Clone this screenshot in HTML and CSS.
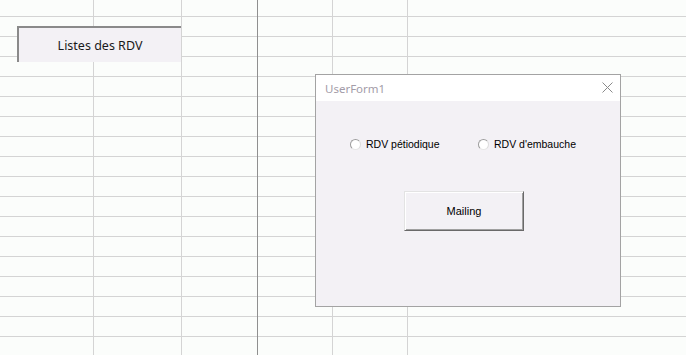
FILE: index.html
```html
<!DOCTYPE html>
<html>
<head>
<meta charset="UTF-8">
<title>Classeur</title>
<link rel="stylesheet" href="styles.css">
</head>
<body>
  <div id="feuille">
    <div class="colonne"></div>
    <div class="colonne"></div>
    <div class="colonne fige"></div>
    <div class="colonne"></div>
    <div class="colonne"></div>
    <div class="colonne dernier"></div>

    <button id="listes" type="button">Listes des RDV</button>

    <div id="userForm">
      <div class="titre">
        <span>UserForm1</span>
        <svg class="fermer" width="11" height="11" viewBox="0 0 11 11">
          <path d="M0.5 0.5 L10.5 10.5 M10.5 0.5 L0.5 10.5" stroke="#8a8a8a" stroke-width="1" fill="none"/>
        </svg>
      </div>
      <div class="corps">
        <div class="choix">
          <label class="option"><span class="rond"></span>RDV pétiodique</label>
          <label class="option"><span class="rond"></span>RDV d'embauche</label>
        </div>
        <button id="mailing" type="button">Mailing</button>
      </div>
    </div>
  </div>
</body>
</html>
```
FILE: styles.css
```css
body{
  margin: 0;
  background-color: #fbfdfb;
  font-family: "Liberation Sans", Arial, sans-serif;
}
#feuille{
  position: relative;
  height: 355px;
  display: grid;
  grid-template-columns: 94px 88px 76px 75px 75px 1fr;
  background-image: repeating-linear-gradient(to bottom, transparent 0 19px, #d4d4d4 19px 20px);
  background-position: 0 -3px;
  overflow: hidden;
}
.colonne{
  border-right: 1px solid #d4d4d4;
}
.fige{
  border-right-color: #8f8f8f;
}
.dernier{
  border-right: none;
}
#listes{
  position: absolute;
  left: 17px;
  top: 26px;
  width: 164px;
  height: 36px;
  margin: 0;
  padding: 0;
  border: none;
  border-top: 2px solid #8a8a8a;
  border-left: 2px solid #8a8a8a;
  background-color: #f3f1f5;
  font-family: "Noto Sans", "Open Sans", sans-serif;
  font-size: 12.5px;
  color: #1a1a1a;
}
#userForm{
  position: absolute;
  left: 315px;
  top: 74px;
  width: 304px;
  height: 231px;
  border: 1px solid #a3a3a3;
  background-color: #f3f1f5;
  display: flex;
  flex-direction: column;
}
.titre{
  height: 26px;
  background-color: #ffffff;
  display: flex;
  align-items: center;
  justify-content: space-between;
  padding: 0 7px 0 9px;
  font-family: "Noto Sans", "Open Sans", sans-serif;
  font-size: 11.5px;
  color: #a39ca8;
}
.fermer{
  margin-bottom: 1px;
}
.corps{
  flex: 1;
  padding: 36px 0 0 34px;
}
.choix{
  display: grid;
  grid-template-columns: 128px auto;
  font-size: 10.5px;
  color: #000;
}
.option{
  display: flex;
  align-items: center;
  gap: 5px;
  height: 14px;
}
.rond{
  width: 9px;
  height: 9px;
  border-radius: 50%;
  border: 1px solid #9c9c9c;
  border-right-color: #dcdcdc;
  border-bottom-color: #e6e6e6;
  background-color: #ffffff;
}
#mailing{
  display: block;
  margin: 40px 0 0 54px;
  width: 120px;
  height: 40px;
  padding: 0;
  border: 1px solid;
  border-color: #e3e3e3 #696969 #696969 #e3e3e3;
  box-shadow: inset 1px 1px 0 #ffffff, inset -1px -1px 0 #a0a0a0;
  background-color: #f3f1f5;
  font-family: "Liberation Sans", Arial, sans-serif;
  font-size: 11px;
  color: #000;
}
```
